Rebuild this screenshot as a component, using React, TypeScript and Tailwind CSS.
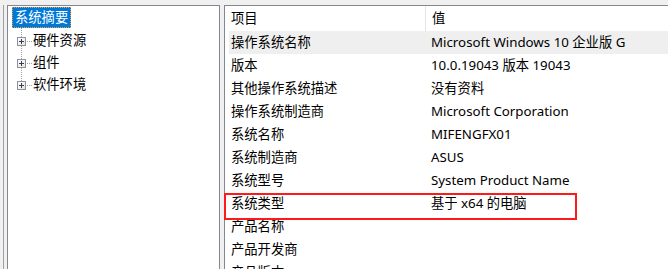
import React from "react";

const rows: [string, string][] = [
  ["操作系统名称", "Microsoft Windows 10 企业版 G"],
  ["版本", "10.0.19043 版本 19043"],
  ["其他操作系统描述", "没有资料"],
  ["操作系统制造商", "Microsoft Corporation"],
  ["系统名称", "MIFENGFX01"],
  ["系统制造商", "ASUS"],
  ["系统型号", "System Product Name"],
  ["系统类型", "基于 x64 的电脑"],
  ["产品名称", ""],
  ["产品开发商", ""],
  ["产品版本", ""],
];

function PlusBox() {
  return (
    <div className="w-[9px] h-[9px] border border-[#919191] bg-gradient-to-br from-white to-[#e3e3e3] relative shrink-0">
      <div className="absolute left-[1px] top-[3px] w-[5px] h-[1px] bg-[#2d3d6b]" />
      <div className="absolute left-[3px] top-[1px] w-[1px] h-[5px] bg-[#2d3d6b]" />
    </div>
  );
}

export default function App() {
  const font = { fontFamily: '"Noto Sans", "Noto Sans CJK SC", sans-serif' };
  return (
    <div
      className="w-[668px] h-[269px] bg-[#f0f0f0] relative overflow-hidden flex pt-[5px] text-[13.3px] text-black"
      style={font}
    >
      {/* left strip */}
      <div className="w-[7px] h-full flex">
        <div className="w-[3px]" />
        <div className="w-[1px] h-[300px] bg-[#a0a0a0]" />
      </div>
      {/* left tree panel */}
      <div className="w-[213px] h-[300px] border border-[#828790] bg-white shrink-0">
        <div className="pl-[4px] pt-[1px]">
          <div className="inline-flex h-[21px] items-center px-[3px] bg-[#0078d7] text-white outline outline-1 outline-dotted outline-[#f0a030] -outline-offset-1 leading-none">
            系统摘要
          </div>
          <div className="relative pt-[2px]">
            <div className="absolute left-[9px] top-0 h-[59px] border-l border-dotted border-[#a0a0a0]" />
            {["硬件资源", "组件", "软件环境"].map((t) => (
              <div key={t} className="flex items-center h-[22px] pl-[5px]">
                <PlusBox />
                <div className="w-[5px] mx-[1px] border-t border-dotted border-[#a0a0a0]" />
                <span className="leading-none">{t}</span>
              </div>
            ))}
          </div>
        </div>
      </div>
      <div className="w-[4px] shrink-0" />
      {/* right list panel */}
      <div className="flex-1 h-[300px] border-l border-t border-[#828790] bg-white">
        <div className="flex h-[25px] items-center">
          <div className="w-[200px] pl-[6px] h-full flex items-center">项目</div>
          <div className="h-full w-[1px] bg-[#e5e5e5]" />
          <div className="pl-[6px] flex items-center">值</div>
        </div>
        <div className="ml-[4px]">
          {rows.map(([k, v], i) => (
            <div
              key={k}
              className={`flex h-[23px] items-center ${i === 0 ? "bg-[#efefef]" : ""}`}
            >
              <div className="w-[200px] pl-[2px] whitespace-nowrap">{k}</div>
              <div className="pl-[2px] whitespace-nowrap">{v}</div>
            </div>
          ))}
        </div>
      </div>
      {/* red highlight */}
      <div className="absolute left-[224px] top-[193px] w-[353px] h-[27px] border-2 border-[#ff1a1a]" />
    </div>
  );
}
